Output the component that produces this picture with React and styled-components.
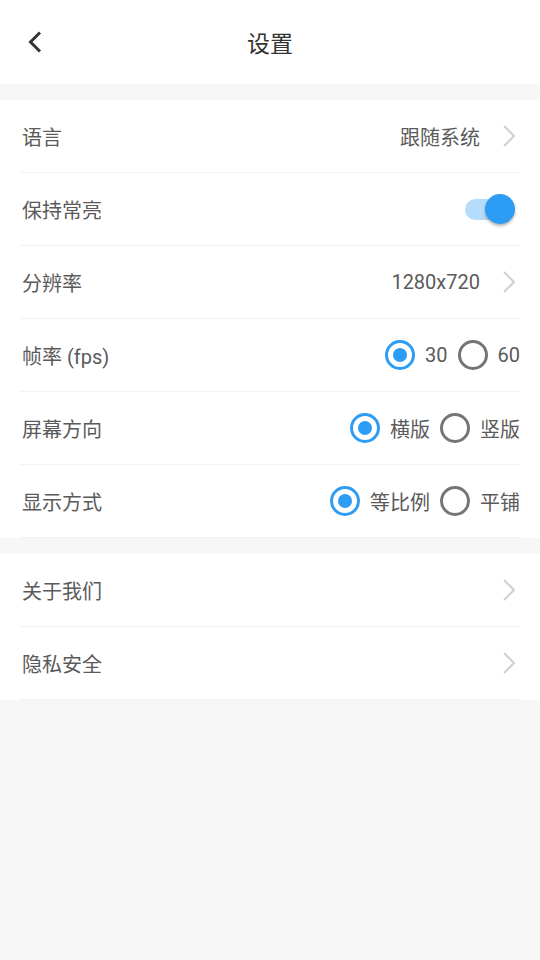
import React, { useState } from 'react';
import styled, { createGlobalStyle } from 'styled-components';

const GlobalStyle = createGlobalStyle`
  html, body {
    margin: 0;
    padding: 0;
    background: #f7f7f7;
    font-family: Roboto, "Noto Sans CJK SC", sans-serif;
  }
  * { box-sizing: border-box; }
`;

// Page shell
const Page = styled.div`
  width: 540px;
  min-height: 960px;
  background: #f7f7f7;
  display: flex;
  flex-direction: column;
`;

// Top navigation bar
const Header = styled.header`
  height: 84px;
  background: #fff;
  display: grid;
  grid-template-columns: 70px 1fr 70px;
  align-items: center;
`;

const BackButton = styled.button`
  border: none;
  background: none;
  padding: 0 0 0 27px;
  height: 40px;
  display: flex;
  align-items: center;
  cursor: pointer;
  color: #333;
`;

const Title = styled.h1`
  margin: 0;
  text-align: center;
  font-size: 23px;
  font-weight: 400;
  color: #333;
`;

// White card holding a list of rows
const Group = styled.section`
  background: #fff;
  margin-top: 16px;
  padding: 0 20px;
`;

const Row = styled.div`
  height: 73px;
  display: flex;
  align-items: center;
  justify-content: space-between;
  border-bottom: 1px solid #f2f2f2;
  padding-left: 2px;
`;

const Label = styled.span`
  font-size: 20px;
  color: #5a5a5a;
`;

const Right = styled.div`
  display: flex;
  align-items: center;
  gap: ${p => p.gap || 0}px;
`;

const Value = styled.span`
  font-size: 20px;
  color: #5a5a5a;
`;

const ChevronBox = styled.span`
  display: flex;
  width: 40px;
  justify-content: flex-end;
  padding-right: 4px;
`;

// Toggle switch
const SwitchTrack = styled.button`
  position: relative;
  width: 48px;
  height: 21px;
  border-radius: 11px;
  border: none;
  padding: 0;
  margin-right: 7px;
  background: ${p => (p.on ? '#b6dcfb' : '#d8d8d8')};
  cursor: pointer;
`;

const SwitchThumb = styled.span`
  position: absolute;
  top: 50%;
  left: ${p => (p.on ? '20px' : '-2px')};
  width: 30px;
  height: 30px;
  margin-top: -15px;
  border-radius: 50%;
  background: ${p => (p.on ? '#2d9cf5' : '#fafafa')};
  box-shadow: 0 2px 3px rgba(0, 0, 0, 0.3);
`;

// Radio options
const RadioOption = styled.label`
  display: flex;
  align-items: center;
  gap: 10px;
  font-size: 20px;
  color: #5a5a5a;
  cursor: pointer;
`;

const RadioCircle = styled.span`
  width: 30px;
  height: 30px;
  border-radius: 50%;
  border: 3px solid ${p => (p.checked ? '#2d9cf5' : '#757575')};
  display: flex;
  align-items: center;
  justify-content: center;

  &::after {
    content: '';
    width: 14px;
    height: 14px;
    border-radius: 50%;
    background: ${p => (p.checked ? '#2d9cf5' : 'transparent')};
  }
`;

const Chevron = () => (
  <svg width="14" height="24" viewBox="0 0 14 24">
    <path d="M2 2 L12 12 L2 22" fill="none" stroke="#d0d0d0" strokeWidth="2" />
  </svg>
);

const RadioGroup = ({ options, value, onChange }) => (
  <Right gap={10}>
    {options.map(o => (
      <RadioOption key={o} onClick={() => onChange(o)}>
        <RadioCircle checked={value === o} />
        {o}
      </RadioOption>
    ))}
  </Right>
);

const App = () => {
  const [keepOn, setKeepOn] = useState(true);
  const [fps, setFps] = useState('30');
  const [orient, setOrient] = useState('横版');
  const [mode, setMode] = useState('等比例');

  return (
    <Page>
      <GlobalStyle />
      <Header>
        <BackButton>
          <svg width="16" height="24" viewBox="0 0 16 24">
            <path d="M13 2.5 L3.5 12 L13 21.5" fill="none" stroke="#333" strokeWidth="3" />
          </svg>
        </BackButton>
        <Title>设置</Title>
        <span />
      </Header>

      <Group>
        <Row>
          <Label>语言</Label>
          <Right>
            <Value>跟随系统</Value>
            <ChevronBox><Chevron /></ChevronBox>
          </Right>
        </Row>
        <Row>
          <Label>保持常亮</Label>
          <SwitchTrack on={keepOn} onClick={() => setKeepOn(!keepOn)}>
            <SwitchThumb on={keepOn} />
          </SwitchTrack>
        </Row>
        <Row>
          <Label>分辨率</Label>
          <Right>
            <Value>1280x720</Value>
            <ChevronBox><Chevron /></ChevronBox>
          </Right>
        </Row>
        <Row>
          <Label>帧率 (fps)</Label>
          <RadioGroup options={['30', '60']} value={fps} onChange={setFps} />
        </Row>
        <Row>
          <Label>屏幕方向</Label>
          <RadioGroup options={['横版', '竖版']} value={orient} onChange={setOrient} />
        </Row>
        <Row>
          <Label>显示方式</Label>
          <RadioGroup options={['等比例', '平铺']} value={mode} onChange={setMode} />
        </Row>
      </Group>

      <Group>
        <Row>
          <Label>关于我们</Label>
          <ChevronBox><Chevron /></ChevronBox>
        </Row>
        <Row>
          <Label>隐私安全</Label>
          <ChevronBox><Chevron /></ChevronBox>
        </Row>
      </Group>
    </Page>
  );
};

export default App;
